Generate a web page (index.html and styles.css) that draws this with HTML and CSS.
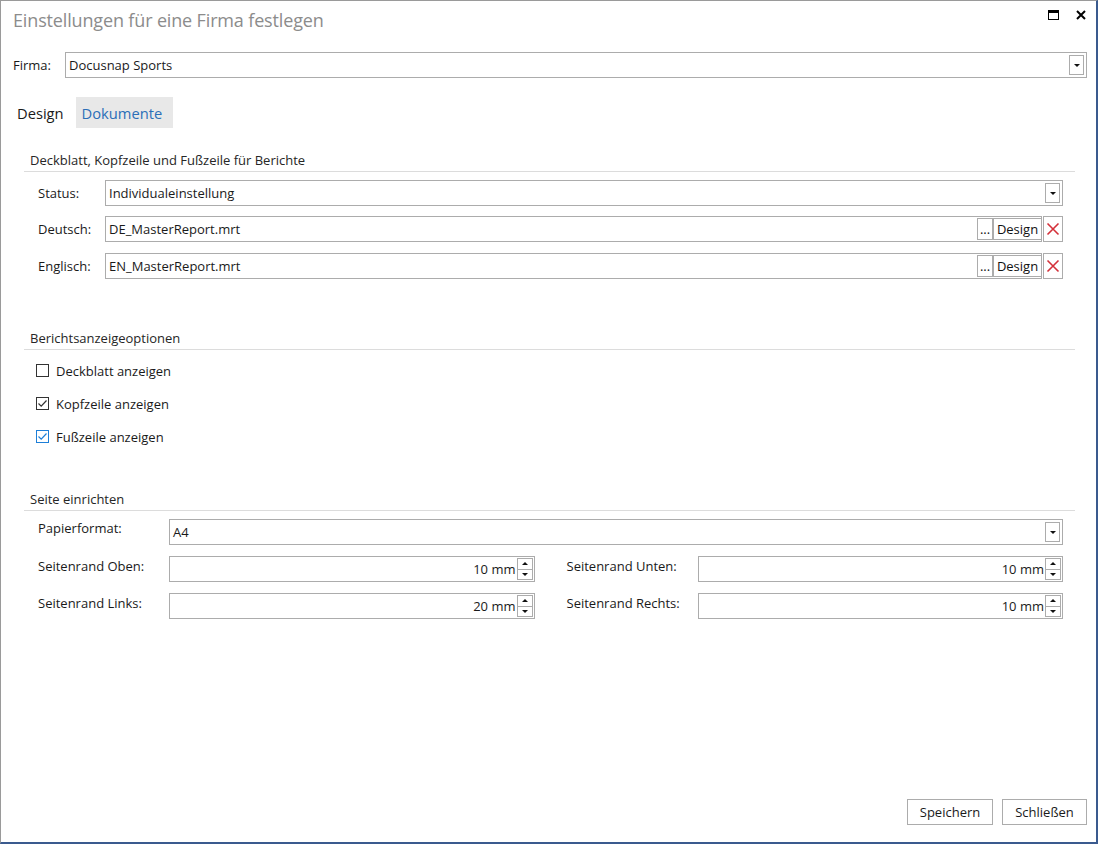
FILE: index.html
```html
<!DOCTYPE html>
<html lang="de">
<head>
<meta charset="utf-8">
<title>Einstellungen für eine Firma festlegen</title>
<link rel="stylesheet" href="styles.css">
</head>
<body>
<div class="window">
  <div class="titlebar">
    <div class="title">Einstellungen für eine Firma festlegen</div>
    <div class="wincontrols">
      <svg class="wc-max" width="11" height="10" viewBox="0 0 11 10"><rect x="0.5" y="0.5" width="10" height="9" fill="none" stroke="#000"/><rect x="0" y="0" width="11" height="3" fill="#000"/></svg>
      <svg class="wc-close" width="10" height="10" viewBox="0 0 10 10"><path d="M1 1L9 9M9 1L1 9" stroke="#000" stroke-width="2"/></svg>
    </div>
  </div>

  <div class="firma-row">
    <span class="firma-label">Firma:</span>
    <div class="combo firma-combo">
      <span class="combo-text">Docusnap Sports</span>
      <span class="combo-btn"><span class="arrow-down"></span></span>
    </div>
  </div>

  <div class="tabs">
    <div class="tab">Design</div>
    <div class="tab tab-active">Dokumente</div>
  </div>

  <div class="content">
    <div class="section-head s1">Deckblatt, Kopfzeile und Fußzeile für Berichte</div>
    <div class="frow">
      <span class="flabel">Status:</span>
      <div class="combo">
        <span class="combo-text">Individualeinstellung</span>
        <span class="combo-btn"><span class="arrow-down"></span></span>
      </div>
    </div>
    <div class="frow">
      <span class="flabel">Deutsch:</span>
      <div class="filebox">
        <span class="combo-text">DE_MasterReport.mrt</span>
        <span class="ibtn dots">...</span>
        <span class="ibtn design">Design</span>
      </div>
      <span class="xbtn"><svg width="14" height="14" viewBox="0 0 14 14"><path d="M1.5 1.5L12.5 12.5M12.5 1.5L1.5 12.5" stroke="#d4313a" stroke-width="1.6"/></svg></span>
    </div>
    <div class="frow r3">
      <span class="flabel">Englisch:</span>
      <div class="filebox">
        <span class="combo-text">EN_MasterReport.mrt</span>
        <span class="ibtn dots">...</span>
        <span class="ibtn design">Design</span>
      </div>
      <span class="xbtn"><svg width="14" height="14" viewBox="0 0 14 14"><path d="M1.5 1.5L12.5 12.5M12.5 1.5L1.5 12.5" stroke="#d4313a" stroke-width="1.6"/></svg></span>
    </div>

    <div class="section-head s2">Berichtsanzeigeoptionen</div>
    <div class="checks">
      <label class="check"><span class="cbox"></span>Deckblatt anzeigen</label>
      <label class="check"><span class="cbox"><svg width="11" height="11" viewBox="0 0 11 11"><path d="M1.5 5.5L4.2 8.2L9.5 2.5" fill="none" stroke="#333" stroke-width="1.2"/></svg></span>Kopfzeile anzeigen</label>
      <label class="check"><span class="cbox cbox-focus"><svg width="11" height="11" viewBox="0 0 11 11"><path d="M1.5 5.5L4.2 8.2L9.5 2.5" fill="none" stroke="#1e7fd8" stroke-width="1.2"/></svg></span>Fußzeile anzeigen</label>
    </div>

    <div class="section-head s3">Seite einrichten</div>
    <div class="prow">
      <span class="plabel">Papierformat:</span>
      <div class="combo">
        <span class="combo-text">A4</span>
        <span class="combo-btn"><span class="arrow-down"></span></span>
      </div>
    </div>
    <div class="mgrid">
      <div class="mrow">
        <span class="plabel">Seitenrand Oben:</span>
        <div class="spin"><span class="spin-text">10 mm</span><span class="spin-btns"><span class="sb"><span class="arrow-up"></span></span><span class="sb"><span class="arrow-down"></span></span></span></div>
      </div>
      <div class="mrow">
        <span class="plabel">Seitenrand Unten:</span>
        <div class="spin"><span class="spin-text">10 mm</span><span class="spin-btns"><span class="sb"><span class="arrow-up"></span></span><span class="sb"><span class="arrow-down"></span></span></span></div>
      </div>
      <div class="mrow">
        <span class="plabel">Seitenrand Links:</span>
        <div class="spin"><span class="spin-text">20 mm</span><span class="spin-btns"><span class="sb"><span class="arrow-up"></span></span><span class="sb"><span class="arrow-down"></span></span></span></div>
      </div>
      <div class="mrow">
        <span class="plabel">Seitenrand Rechts:</span>
        <div class="spin"><span class="spin-text">10 mm</span><span class="spin-btns"><span class="sb"><span class="arrow-up"></span></span><span class="sb"><span class="arrow-down"></span></span></span></div>
      </div>
    </div>
  </div>

  <div class="footer">
    <button class="btn save">Speichern</button>
    <button class="btn close">Schließen</button>
  </div>
</div>
</body>
</html>
```

FILE: styles.css
```css
* { box-sizing: border-box; }
html, body { margin: 0; padding: 0; background: #fff; }
body {
  font-family: "Open Sans", "Noto Sans", "DejaVu Sans", sans-serif;
  font-size: 13px;
  color: #1a1a1a;
}
.window {
  width: 1098px;
  height: 844px;
  border-left: 1px solid #9a9a9a;
  border-top: 1px solid #9a9a9a;
  border-right: 2px solid #3a5a8e;
  border-bottom: 2px solid #3a5a8e;
  display: flex;
  flex-direction: column;
  padding: 0 9px 0 12px;
}
.titlebar {
  height: 39px;
  padding-bottom: 2px;
  display: flex;
  align-items: center;
  justify-content: space-between;
}
.title {
  font-size: 18px;
  color: #8c8c8c;
  letter-spacing: -0.15px;
}
.wincontrols { display: flex; align-items: center; gap: 17px; padding-right: 1px; margin-top: -10px; }
.firma-row {
  margin-top: 12px;
  display: flex;
  align-items: center;
  height: 26px;
}
.firma-label { width: 52px; }
.combo {
  flex: 1;
  height: 26px;
  border: 1px solid #acacac;
  display: flex;
  align-items: center;
  padding: 2px;
}
.combo-text { flex: 1; padding-left: 1px; white-space: nowrap; }
.combo-btn {
  width: 15px;
  height: 20px;
  border: 1px solid #acacac;
  display: flex;
  align-items: center;
  justify-content: center;
}
.arrow-down {
  width: 0; height: 0;
  border-left: 3px solid transparent;
  border-right: 3px solid transparent;
  border-top: 3px solid #111;
}
.arrow-up {
  width: 0; height: 0;
  border-left: 3px solid transparent;
  border-right: 3px solid transparent;
  border-bottom: 3px solid #111;
}
.tabs {
  margin-top: 19px;
  display: flex;
  height: 31px;
  gap: 7px;
}
.tab {
  display: flex;
  align-items: center;
  padding: 0 5px 0 4px;
  font-size: 14.7px;
  color: #1a1a1a;
}
.tab-active {
  background: #e8e8e8;
  color: #2b6fb8;
  padding: 0 11px 0 6px;
}
.content { padding: 0 12px 0 11px; flex: 1; }
.section-head {
  height: 24px;
  border-bottom: 1px solid #dcdcdc;
  padding-left: 6px;
  color: #262626;
  display: flex;
  align-items: center;
}
.s1 { margin-top: 20px; }
.s2 { margin-top: 47px; }
.s3 { margin-top: 34px; }
.frow {
  display: flex;
  align-items: center;
  height: 26px;
  margin-top: 10px;
  padding-left: 14px;
  margin-right: 12px;
}
.section-head + .frow { margin-top: 8px; }
.frow.r3 { margin-top: 11px; }
.flabel { width: 67px; }
.filebox {
  flex: 1;
  height: 26px;
  border: 1px solid #acacac;
  display: flex;
  align-items: center;
  padding: 1px 0 1px 2px;
}
.ibtn {
  height: 22px;
  border: 1px solid #acacac;
  display: flex;
  align-items: center;
  justify-content: center;
  color: #111;
}
.dots { width: 16px; align-items: flex-end; padding-bottom: 3px; line-height: 1; }
.design { width: 49px; margin-right: -1px; }
.xbtn {
  width: 20px;
  height: 26px;
  border: 1px solid #acacac;
  display: flex;
  align-items: center;
  justify-content: center;
  margin-left: 1px;
}
.checks { padding-top: 4px; padding-left: 12px; }
.check {
  height: 33px;
  display: flex;
  align-items: center;
}
.cbox {
  width: 13px; height: 13px;
  border: 1px solid #333;
  margin-right: 7px;
  display: flex;
  align-items: center;
  justify-content: center;
}
.cbox-focus { border-color: #1e7fd8; }
.prow {
  display: flex;
  margin-top: 8px;
  padding-left: 14px;
  margin-right: 12px;
}
.plabel { width: 131px; line-height: 18px; }
.mgrid {
  display: grid;
  grid-template-columns: 1fr 1fr;
  column-gap: 32px;
  row-gap: 11px;
  margin-top: 11px;
  padding-left: 14px;
  margin-right: 12px;
}
.mrow { display: flex; }
.mrow .plabel { padding-top: 1px; }
.spin {
  flex: 1;
  height: 26px;
  border: 1px solid #acacac;
  display: flex;
  align-items: center;
  padding: 1px;
}
.spin-text { flex: 1; text-align: right; padding-right: 1px; }
.spin-btns { display: flex; flex-direction: column; width: 16px; height: 22px; }
.sb {
  flex: 1;
  border: 1px solid #acacac;
  display: flex;
  align-items: center;
  justify-content: center;
}
.sb + .sb { border-top: none; }
.footer {
  display: flex;
  justify-content: flex-end;
  gap: 9px;
  padding-bottom: 17px;
}
.btn {
  font-family: inherit;
  font-size: 13px;
  color: #1a1a1a;
  background: #fff;
  border: 1px solid #acacac;
  height: 26px;
  padding: 0;
  margin: 0;
}
.save { width: 86px; }
.close { width: 85px; }
```
